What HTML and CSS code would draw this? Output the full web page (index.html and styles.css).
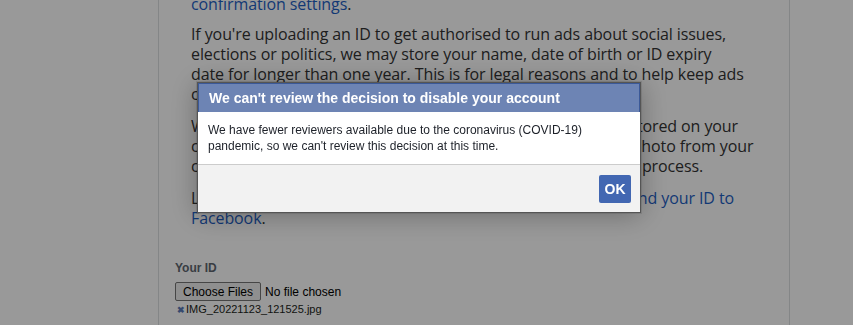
FILE: index.html
```html
<!DOCTYPE html>
<html lang="en">
<head>
<meta charset="utf-8">
<title>Upload your ID</title>
<link rel="stylesheet" href="styles.css">
</head>
<body>
<div class="page">
  <main class="panel">
    <div class="copy">
      <p class="lead"><a href="#">confirmation settings</a>.</p>
      <p>If you're uploading an ID to get authorised to run ads about social issues,<br>elections or politics, we may store your name, date of birth or ID expiry<br>date for longer than one year. This is for legal reasons and to help keep ads<br>compliant and transparent.</p>
      <p>We'll use your ID to confirm it's you. The photo of your ID is stored on your<br>computer until you've sent it to us, and you can remove the photo from your<br>computer at any point after you've finalised the confirmation process.</p>
      <p>Learn more about <a href="#">how we'll use your ID and how to safely send your ID to<br>Facebook</a>.</p>
    </div>
    <div class="field">
      <label class="field-label" for="idfile">Your ID</label>
      <input id="idfile" class="file" type="file" multiple>
      <div class="chosen"><span class="remove">&#x2716;</span>IMG_20221123_121525.jpg</div>
    </div>
  </main>
</div>

<div class="overlay"></div>

<div class="dialog" role="dialog" aria-labelledby="dlg-title">
  <h2 class="dialog-title" id="dlg-title">We can't review the decision to disable your account</h2>
  <div class="dialog-body">We have fewer reviewers available due to the coronavirus (COVID-19) pandemic, so we can't review this decision at this time.</div>
  <div class="dialog-footer">
    <button class="btn-ok" type="button">OK</button>
  </div>
</div>
</body>
</html>
```
FILE: styles.css
```css
html, body {
  margin: 0;
  padding: 0;
  background: #fff;
  height: 100%;
  overflow: hidden;
}

.page {
  padding-left: 158px;
}

.panel {
  width: 630px;
  height: 400px;
  border-left: 1px solid #dddfe2;
  border-right: 1px solid #dddfe2;
  margin-top: -6px;
  overflow: hidden;
}

.copy {
  padding: 0 32px;
  font-family: "Open Sans", sans-serif;
  font-size: 16px;
  letter-spacing: -0.1px;
  line-height: 20px;
  color: #333;
}

.copy p {
  margin: 0 0 12px;
  white-space: nowrap;
}

.copy p.lead {
  margin-bottom: 10px;
}

.copy a {
  color: #1f5fc4;
  text-decoration: none;
}

.field {
  padding: 20px 16px 0;
  font-family: "Liberation Sans", Arial, sans-serif;
}

.field-label {
  display: block;
  font-size: 12px;
  font-weight: bold;
  line-height: 16px;
  color: #606770;
  margin-bottom: 6px;
}

.file {
  display: block;
  font-family: "Liberation Sans", Arial, sans-serif;
  font-size: 12px;
  color: #000;
  margin: 0;
}

.file::file-selector-button {
  font-family: "Liberation Sans", Arial, sans-serif;
  font-size: 12px;
  height: 19px;
  padding: 0 7px;
  margin-right: 4px;
  border: 1px solid #767676;
  border-radius: 2px;
  background: #efefef;
  color: #000;
}

.chosen {
  font-size: 11px;
  line-height: 16px;
  color: #1c1e21;
  margin-top: 0;
  padding-left: 2px;
}

.remove {
  display: inline-block;
  font-size: 9px;
  font-weight: bold;
  color: #5b7bb8;
  margin-right: 1px;
}

.overlay {
  position: fixed;
  inset: 0;
  background: rgba(0, 0, 0, 0.4);
}

.dialog {
  position: fixed;
  left: 197px;
  top: 82px;
  width: 442px;
  border: 1px solid #555;
  background: #fff;
  font-family: "Liberation Sans", Arial, sans-serif;
  box-shadow: 0 2px 26px rgba(0, 0, 0, 0.3), 0 0 0 1px rgba(0, 0, 0, 0.1);
}

.dialog-title {
  margin: 0;
  background: #6d84b4;
  border: 1px solid #3b5998;
  border-bottom: 0;
  color: #fff;
  font-size: 14px;
  font-weight: bold;
  line-height: 17px;
  padding: 6px 10px 5px;
}

.dialog-body {
  padding: 10px 10px 10px;
  font-size: 12px;
  line-height: 16px;
  color: #1d2129;
}

.dialog-footer {
  display: flex;
  justify-content: flex-end;
  background: #f2f2f2;
  border-top: 1px solid #ccc;
  padding: 10px 9px 9px;
}

.btn-ok {
  width: 32px;
  height: 28px;
  padding: 0;
  border: 0;
  border-radius: 2px;
  background: #4267b2;
  color: #fff;
  font-family: "Liberation Sans", Arial, sans-serif;
  font-size: 14px;
  font-weight: bold;
}
```
